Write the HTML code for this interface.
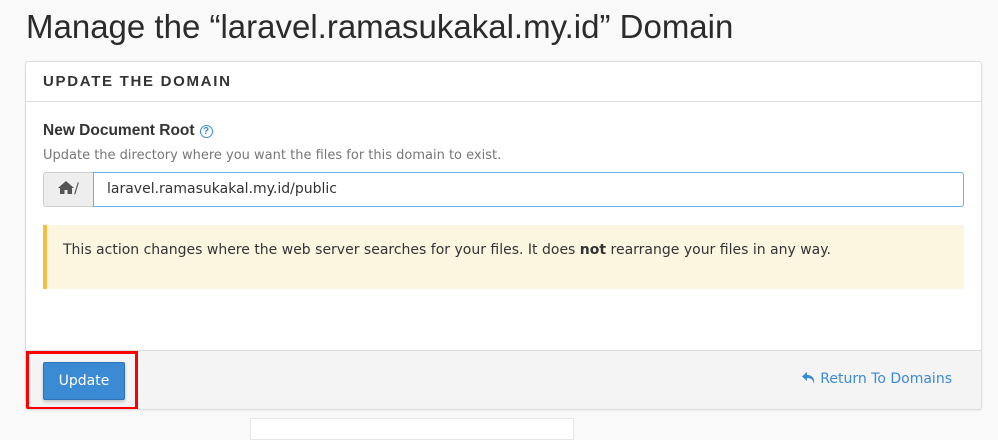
<!DOCTYPE html>
<html><head><style>
body{margin:0;background:#f9f9f9;font-family:"DejaVu Sans",sans-serif;color:#333;width:998px;height:427px;overflow:hidden;position:relative}
h1{position:absolute;left:26px;top:8px;margin:0;font-weight:normal;font-size:33px;color:#2b2b2b;font-family:"Liberation Sans",sans-serif}
.panel{position:absolute;left:25px;top:61px;width:955px;height:347px;background:#fff;border:1px solid #ddd;border-radius:3px;box-shadow:0 1px 2px rgba(0,0,0,.06);overflow:hidden}
.hd{height:39px;border-bottom:1px solid #ddd;font-size:15px;font-weight:bold;letter-spacing:1.7px;color:#333;line-height:39px;padding-left:17px;font-family:"Liberation Sans",sans-serif}
.lbl{position:absolute;left:17px;top:60px;font-weight:bold;font-size:15.5px;color:#333;font-family:"Liberation Sans",sans-serif}
.q{display:inline-block;width:11px;height:11px;border:1.5px solid #3a8ad6;border-radius:50%;color:#3a8ad6;font-size:10px;line-height:11px;text-align:center;margin-left:5px;vertical-align:1px}
.help{position:absolute;left:17px;top:86px;font-size:13px;color:#777}
.ig{position:absolute;left:17px;top:110px;width:921px;height:35px}
.add{position:absolute;left:0;top:0;width:49px;height:33px;background:#eee;border:1px solid #ccc;border-radius:3px 0 0 3px;font-size:14px;line-height:33px;text-align:center;color:#555}
.inp{position:absolute;left:50px;top:0;border:1px solid #66afe9;border-radius:0 3px 3px 0;font-size:14px;line-height:33px;padding-left:13px;box-sizing:border-box;width:871px;height:35px;color:#333}
.warn{position:absolute;left:17px;top:163px;height:64px;background:#fcf6e1;border-left:4px solid #f0c040;font-size:14px;line-height:50px;padding-left:16px;box-sizing:border-box;width:921px}
.ft{position:absolute;left:0;top:288px;width:955px;height:59px;background:#f4f4f4;border-top:1px solid #ddd}
.btn{position:absolute;left:17px;top:11px;width:80px;height:36px;background:#3b8ad4;border:1px solid #2d72b8;border-radius:2px;color:#fff;font-size:14px;line-height:36px;text-align:center;box-shadow:0 2px 3px rgba(0,0,0,.2)}
.red{position:absolute;left:0;top:0;width:106px;height:53px;border:3px solid #f00}
.ret{position:absolute;right:29px;top:20px;font-size:14px;color:#3a8ad6}
.ghost{position:absolute;left:250px;top:418px;width:322px;height:20px;border:1px solid #e6e6e6;background:#fff}
</style></head><body>
<h1>Manage the “laravel.ramasukakal.my.id” Domain</h1>
<div class="panel">
<div class="hd">UPDATE THE DOMAIN</div>
<div class="lbl">New Document Root<span class="q">?</span></div>
<div class="help">Update the directory where you want the files for this domain to exist.</div>
<div class="ig"><div class="add"><svg width="16" height="13" viewBox="0 0 16 13" style="vertical-align:-1px"><path d="M8 0L0 7h2v6h4.5V9h3v4H14V7h2z" fill="#555"/></svg>/</div><div class="inp">laravel.ramasukakal.my.id/public</div></div>
<div class="warn">This action changes where the web server searches for your files. It does <b>not</b> rearrange your files in any way.</div>
<div class="ft"><div class="red"></div><div class="btn">Update</div><div class="ret"><svg width="14" height="14" viewBox="0 0 14 14" style="vertical-align:-2px"><path d="M5 1L0 5.5 5 10V7c4 0 6 1.5 7 6 1-6-2-9-7-9z" fill="#3a8ad6"/></svg> Return To Domains</div></div>
</div>
<div class="ghost"></div>
</body></html>
